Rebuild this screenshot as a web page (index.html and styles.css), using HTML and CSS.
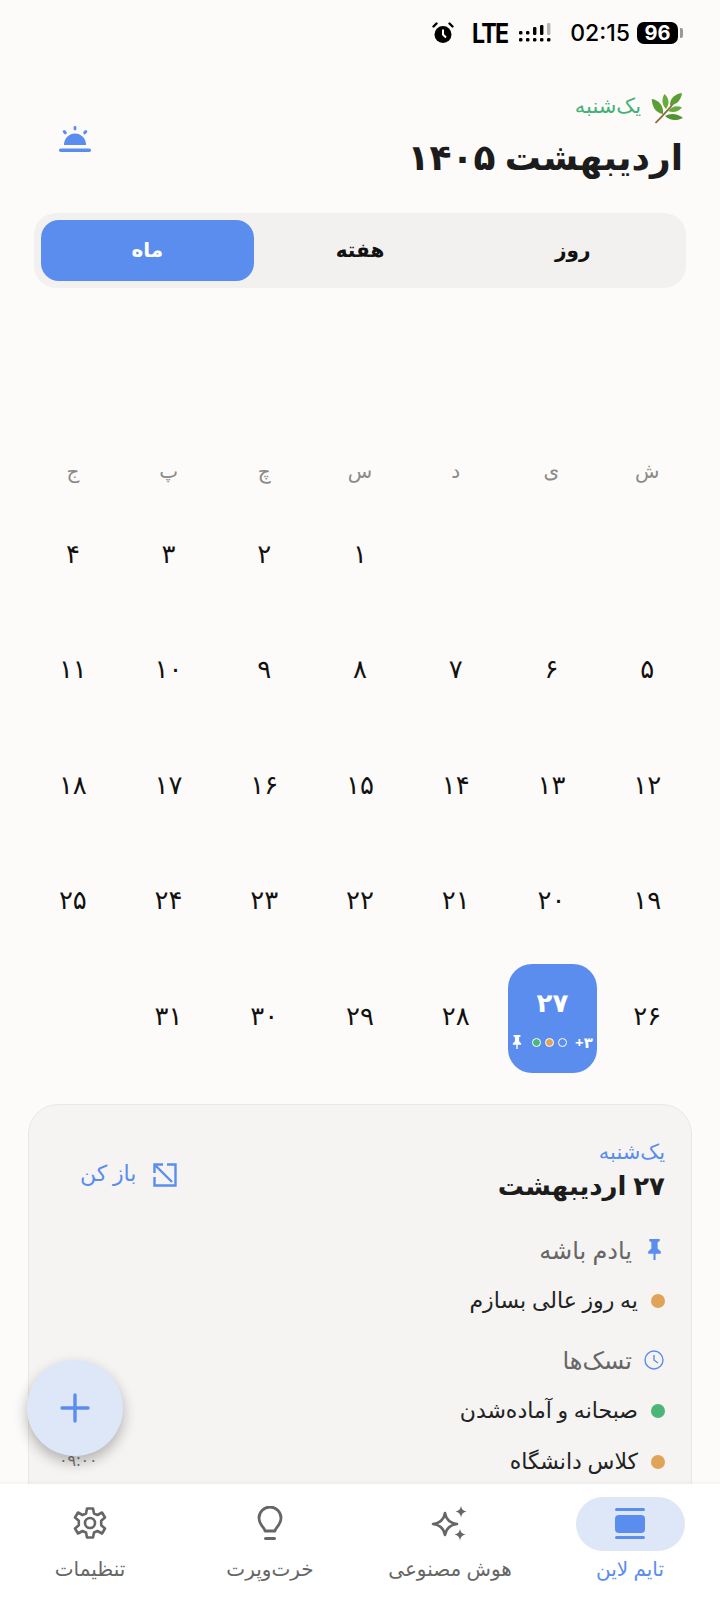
FILE: index.html
```html
<!DOCTYPE html>
<html lang="fa" dir="rtl">

<head>
  <meta charset="UTF-8">
  <title>تایم لاین</title>
  <link rel="stylesheet" href="styles.css">
</head>

<body>
  <div class="page">
    <!-- Status bar -->
    <div class="status-bar" dir="ltr">
      <svg class="alarm" viewBox="0 0 22 22" width="22" height="22">
        <circle cx="11" cy="12.5" r="8.5" fill="#000" />
        <path d="M1.500 4.500 4.500 1.500M20.500 4.500 17.500 1.500" stroke="#000" stroke-width="2.400" stroke-linecap="round" />
        <path d="M11 7.500v5l3 3" stroke="#fff" stroke-width="2" fill="none" />
      </svg>
      <span class="lte">LTE</span>
      <svg class="signal" viewBox="0 0 32 20" width="32" height="20">
        <g fill="#000">
          <rect x="0" y="8" width="3.400" height="3.400" rx="1.200" />
          <rect x="0" y="15" width="3.400" height="3.400" rx="1.200" />
          <rect x="7" y="8" width="3.400" height="3.400" rx="1.200" />
          <rect x="7" y="15" width="3.400" height="3.400" rx="1.200" />
          <rect x="14" y="4" width="3.400" height="8" rx="1.200" />
          <rect x="14" y="15" width="3.400" height="3.400" rx="1.200" />
          <rect x="21" y="2" width="3.400" height="10" rx="1.200" />
          <rect x="21" y="15" width="3.400" height="3.400" rx="1.200" />
          <rect x="28" y="15" width="3.400" height="3.400" rx="1.200" />
        </g>
        <rect x="28" y="0" width="3.400" height="12" rx="1.200" fill="#b4b4b4" />
      </svg>
      <span class="clock">02:15</span>
      <span class="battery">96</span>
      <span class="battery-nub"></span>
    </div>

    <div class="content">
      <!-- Header -->
      <header class="top-header">
        <div class="header-text">
          <div class="day-line">
            <svg class="leaf" viewBox="0 0 32 32" width="32" height="32">
              <path d="M4.500 31C10 25 17 20 27 5" stroke="#8a6a35" stroke-width="1.800" fill="none" />
              <path d="M12 22C5 21 1 15 .7 7 8 8 13 14 12 22z" fill="#5a9e35" />
              <path d="M15 17C10 12 11 6 13.500 2 18 6 19 12 15 17z" fill="#66ab3c" />
              <path d="M19 13c0-7 5-11 12-12-1 7-5 12-12 12z" fill="#5a9e35" />
              <path d="M17 19c4-5 9-6 14-3.500-4 4.500-9 5.500-14 3.500z" fill="#66ab3c" />
              <path d="M14 24c5-3 12-3 18 2-6 3-13 3-18-2z" fill="#4f9430" />
            </svg>
            <span class="day-name">یک‌شنبه</span>
          </div>
          <h1 class="month-title">اردیبهشت ۱۴۰۵</h1>
        </div>
        <svg class="sun" viewBox="0 0 32 26" width="32" height="26">
          <path d="M5 19a11 11.500 0 0 1 22 0z" fill="#5b8def" />
          <rect x="0" y="22.500" width="32" height="3.500" rx="1.750" fill="#5b8def" />
          <rect x="14.600" y="0" width="2.800" height="4.500" rx="1.400" fill="#5b8def" />
          <path d="M5.200 5.600 6.300 6.800M26.800 5.600 25.700 6.800" stroke="#5b8def" stroke-width="3" stroke-linecap="round" />
        </svg>
      </header>

      <!-- View switch -->
      <div class="segments">
        <div class="segment">روز</div>
        <div class="segment">هفته</div>
        <div class="segment active">ماه</div>
      </div>

      <!-- Calendar -->
      <div class="calendar">
        <div class="weekdays">
          <span>ش</span><span>ی</span><span>د</span><span>س</span><span>چ</span><span>پ</span><span>ج</span>
        </div>
        <div class="days">
          <div class="day"></div><div class="day"></div><div class="day"></div>
          <div class="day">۱</div><div class="day">۲</div><div class="day">۳</div><div class="day">۴</div>
          <div class="day">۵</div><div class="day">۶</div><div class="day">۷</div><div class="day">۸</div>
          <div class="day">۹</div><div class="day">۱۰</div><div class="day">۱۱</div>
          <div class="day">۱۲</div><div class="day">۱۳</div><div class="day">۱۴</div><div class="day">۱۵</div>
          <div class="day">۱۶</div><div class="day">۱۷</div><div class="day">۱۸</div>
          <div class="day">۱۹</div><div class="day">۲۰</div><div class="day">۲۱</div><div class="day">۲۲</div>
          <div class="day">۲۳</div><div class="day">۲۴</div><div class="day">۲۵</div>
          <div class="day">۲۶</div>
          <div class="day selected">
            <span class="selected-num">۲۷</span>
            <div class="selected-marks">
              <span class="more" dir="ltr">+۳</span>
              <span class="mini-dot ring"></span>
              <span class="mini-dot orange"></span>
              <span class="mini-dot green"></span>
              <svg class="mini-pin" viewBox="0 0 14 20" width="10" height="14">
                <path d="M2 0h10v2l-2 1v6l3 3v2H8v6H6v-6H1v-2l3-3V3L2 2z" fill="#fff" />
              </svg>
            </div>
          </div>
          <div class="day">۲۸</div><div class="day">۲۹</div><div class="day">۳۰</div><div class="day">۳۱</div>
        </div>
      </div>

      <!-- Day details -->
      <section class="day-card">
        <div class="card-head">
          <div>
            <div class="card-day">یک‌شنبه</div>
            <div class="card-date">۲۷ اردیبهشت</div>
          </div>
          <div class="open-link">
            <svg viewBox="0 0 24 24" width="24" height="24">
              <path d="M10 1.500H1.500V10M14 1.500h8.500v21h-21V14M3 3l16 16" stroke="#5b8def" stroke-width="2.400" fill="none" />
            </svg>
            <span>باز کن</span>
          </div>
        </div>

        <div class="section-title">
          <svg viewBox="0 0 14 20" width="15" height="21">
            <path d="M2 0h10v2l-2 1v6l3 3v2H8v6H6v-6H1v-2l3-3V3L2 2z" fill="#5b8def" />
          </svg>
          <span>یادم باشه</span>
        </div>
        <div class="item">
          <span class="dot orange"></span>
          <span>یه روز عالی بسازم</span>
        </div>

        <div class="section-title tasks">
          <svg viewBox="0 0 20 20" width="20" height="20">
            <circle cx="10" cy="10" r="9" stroke="#5b8def" stroke-width="1.400" fill="none" />
            <path d="M10 5v5l4 3" stroke="#5b8def" stroke-width="1.400" fill="none" />
          </svg>
          <span>تسک‌ها</span>
        </div>
        <div class="item">
          <span class="dot green"></span>
          <span>صبحانه و آماده‌شدن</span>
          <span class="item-time">۰۷:۰۰</span>
        </div>
        <div class="item">
          <span class="dot orange"></span>
          <span>کلاس دانشگاه</span>
          <span class="item-time">۰۹:۰۰</span>
        </div>
      </section>
    </div>

    <!-- Add button -->
    <button class="fab">
      <svg viewBox="0 0 30 30" width="30" height="30">
        <path d="M15 2v26M2 15h26" stroke="#5b8def" stroke-width="3.400" stroke-linecap="round" />
      </svg>
    </button>

    <!-- Bottom nav -->
    <nav class="bottom-nav">
      <div class="nav-item active">
        <div class="nav-icon">
          <svg viewBox="0 0 32 32" width="32" height="32">
            <rect x="1" y="0" width="30" height="3" rx="1.500" fill="#5b8def" />
            <rect x="1" y="7" width="30" height="18" rx="4" fill="#5b8def" />
            <rect x="1" y="28" width="30" height="3" rx="1.500" fill="#5b8def" />
          </svg>
        </div>
        <span>تایم لاین</span>
      </div>
      <div class="nav-item">
        <div class="nav-icon">
          <svg viewBox="0 0 38 38" width="38" height="38">
            <path d="M14 8c1 6 4 10 12 11-8 1-11 5-12 11-1-6-4-10-12-11 8-1 11-5 12-11z" stroke="#666" stroke-width="2.600" fill="none" stroke-linejoin="round" />
            <path d="M30 1c.5 3 2 5 5.500 5.500C32 7 30.500 9 30 12.500 29.500 9 28 7 24.500 6.500 28 6 29.500 4 30 1zM29 24c.5 3 2 5 5.500 5.500C31 30 29.500 32 29 35.500 28.500 32 27 30 23.500 29.500 27 29 28.500 27 29 24z" fill="#666" />
          </svg>
        </div>
        <span>هوش مصنوعی</span>
      </div>
      <div class="nav-item">
        <div class="nav-icon">
          <svg viewBox="0 0 26 36" width="26" height="36">
            <path d="M8 25c0-3-6-6-6-13a11 11 0 0 1 22 0c0 7-6 10-6 13z" stroke="#666" stroke-width="2.800" fill="none" stroke-linejoin="round" />
            <rect x="7" y="31" width="12" height="3" rx="1.500" fill="#666" />
          </svg>
        </div>
        <span>خرت‌وپرت</span>
      </div>
      <div class="nav-item">
        <div class="nav-icon">
          <svg viewBox="0 0 34 34" width="34" height="34">
            <path d="M14 1.500h6l1 5 3.500 1.500 4.500-2.500 3 5-3.800 3.300v4.400L32 21.500l-3 5-4.500-2.500-3.500 1.500-1 5h-6l-1-5-3.500-1.500L5 26.500l-3-5 3.800-3.300v-4.400L2 10.500l3-5L9.500 8 13 6.500z" stroke="#666" stroke-width="2.600" fill="none" stroke-linejoin="round" />
            <circle cx="17" cy="16" r="5" stroke="#666" stroke-width="2.600" fill="none" />
          </svg>
        </div>
        <span>تنظیمات</span>
      </div>
    </nav>
  </div>
</body>

</html>
```

FILE: styles.css
```css
/* Base */

* {
  box-sizing: border-box;
}

body {
  margin: 0;
  font-family: "Noto Sans", "DejaVu Sans", sans-serif;
  background-color: #fcfbf9;
  color: #1c1c1c;
}

.page {
  width: 720px;
  height: 1600px;
  position: relative;
  display: flex;
  flex-direction: column;
  overflow: hidden;
}

/* Status bar */
.status-bar {
  height: 66px;
  flex-shrink: 0;
  display: flex;
  align-items: center;
  justify-content: flex-end;
  padding: 0 37px 0 0;
  font-family: Inter, sans-serif;
  color: #000;
}

.alarm {
  margin-right: 18px;
}

.lte {
  width: 38px;
  margin-right: 9px;
  font-size: 27px;
  font-weight: 700;
  letter-spacing: -2px;
  transform: scaleX(0.86);
  transform-origin: left center;
}

.signal {
  margin-right: 19px;
}

.clock {
  font-size: 23px;
  font-weight: 500;
  margin-right: 7px;
}

.battery {
  width: 41px;
  height: 22px;
  border-radius: 7px;
  background-color: #000;
  color: #fff;
  font-size: 20px;
  font-weight: 700;
  line-height: 22px;
  text-align: center;
}

.battery-nub {
  width: 3px;
  height: 10px;
  margin-left: 2px;
  background-color: #999;
  border-radius: 0 2px 2px 0;
}

.content {
  flex: 1;
  min-height: 0;
  overflow: hidden;
}

/* Header */
.top-header {
  display: flex;
  justify-content: space-between;
  align-items: center;
  padding: 14px 37px 0 59px;
  height: 126px;
}

.day-line {
  display: flex;
  align-items: center;
  gap: 10px;
  height: 32px;
}

.leaf {
  margin-top: 2px;
}

.day-name {
  padding-bottom: 4px;
  color: #45b078;
  font-size: 21px;
}

.month-title {
  margin: 10px 0 0;
  font-size: 36px;
  font-weight: 700;
  line-height: 48px;
}

.sun {
  margin-top: 6px;
}

/* Segments */
.segments {
  margin: 21px 34px 0;
  padding: 7px;
  height: 75px;
  display: flex;
  background-color: #f2f1ef;
  border-radius: 22px;
}

.segment {
  flex: 1;
  display: flex;
  align-items: center;
  justify-content: center;
  padding-bottom: 3px;
  font-size: 20px;
  font-weight: 700;
  color: #111;
}

.segment.active {
  background-color: #5b8def;
  color: #fff;
  border-radius: 18px;
}

/* Calendar */
.calendar {
  padding: 0 25px;
}

.weekdays {
  margin-top: 161px;
  height: 53px;
  display: grid;
  grid-template-columns: repeat(7, 1fr);
  text-align: center;
  color: #8a8a8a;
  font-size: 20px;
  line-height: 44px;
}

.days {
  display: grid;
  grid-template-columns: repeat(7, 1fr);
  grid-auto-rows: 115.500px;
}

.day {
  height: 109px;
  display: flex;
  align-items: center;
  justify-content: center;
  padding-bottom: 8px;
  font-size: 26px;
  color: #111;
}

.day.selected {
  width: 89px;
  justify-self: center;
  position: relative;
  left: 1px;
  flex-direction: column;
  justify-content: flex-start;
  padding: 20px 0 0;
  background-color: #5b8def;
  border-radius: 24px;
  color: #fff;
}

.selected-num {
  font-size: 26px;
  font-weight: 700;
  line-height: 36px;
}

.selected-marks {
  margin-top: 12px;
  display: flex;
  align-items: center;
  gap: 4px;
  font-size: 15px;
  font-weight: 700;
}

.more {
  margin-left: 4px;
}

.mini-dot {
  width: 9px;
  height: 9px;
  border-radius: 50%;
  border: 1px solid #fff;
}

.mini-dot.ring {
  background-color: #5b8def;
}

.mini-pin {
  margin-right: 6px;
}

.orange {
  background-color: #e0a458;
}

.green {
  background-color: #4cb578;
}

/* Day card */
.day-card {
  margin: 24px 28px 0;
  padding: 33px 26px 0 51px;
  height: 600px;
  background-color: #f5f4f2;
  border: 1px solid #e9e8e5;
  border-radius: 30px;
}

.card-head {
  display: flex;
  justify-content: space-between;
  align-items: flex-start;
}

.card-day {
  color: #5b8def;
  font-size: 21px;
  line-height: 26px;
}

.card-date {
  margin-top: 1px;
  font-size: 26px;
  font-weight: 700;
  line-height: 40px;
}

.open-link {
  display: flex;
  align-items: center;
  gap: 17px;
  margin-top: 19px;
  color: #5b8def;
  font-size: 22px;
}

.open-link svg {
  margin-top: 6px;
}

.section-title {
  display: flex;
  align-items: center;
  gap: 15px;
  margin-top: 30px;
  padding-right: 3px;
  height: 30px;
  color: #666;
  font-size: 24px;
  font-weight: 500;
}

.section-title.tasks {
  margin-top: 19px;
  padding-right: 1px;
  gap: 12px;
}

.item {
  display: flex;
  align-items: center;
  gap: 13px;
  height: 50px;
  margin-top: 1px;
  padding-bottom: 4px;
  font-size: 22px;
  color: #222;
}

.section-title + .item {
  margin-top: 11px;
}

.dot {
  width: 14px;
  height: 14px;
  margin-top: 4px;
  border-radius: 50%;
}

.item-time {
  margin-right: auto;
  margin-left: -21px;
  color: #777;
  font-size: 16px;
}

/* FAB */
.fab {
  position: absolute;
  left: 27px;
  top: 1360px;
  width: 96px;
  height: 96px;
  display: flex;
  align-items: center;
  justify-content: center;
  border: none;
  border-radius: 50%;
  background-color: #dee7f8;
  box-shadow: 0 6px 14px rgba(0, 0, 0, 0.28);
}

/* Bottom nav */
.bottom-nav {
  height: 116px;
  flex-shrink: 0;
  position: relative;
  display: grid;
  grid-template-columns: repeat(4, 1fr);
  background-color: #fff;
  box-shadow: 0 -2px 3px rgba(0, 0, 0, 0.03);
}

.nav-item {
  display: flex;
  flex-direction: column;
  align-items: center;
  color: #666;
  font-size: 20px;
  padding-top: 13px;
}

.nav-icon {
  width: 109px;
  height: 54px;
  display: flex;
  align-items: center;
  justify-content: center;
  border-radius: 27px;
  margin-bottom: 4px;
}

.nav-item.active {
  color: #5b8def;
}

.nav-item.active .nav-icon {
  background-color: #dee7f7;
}
```
